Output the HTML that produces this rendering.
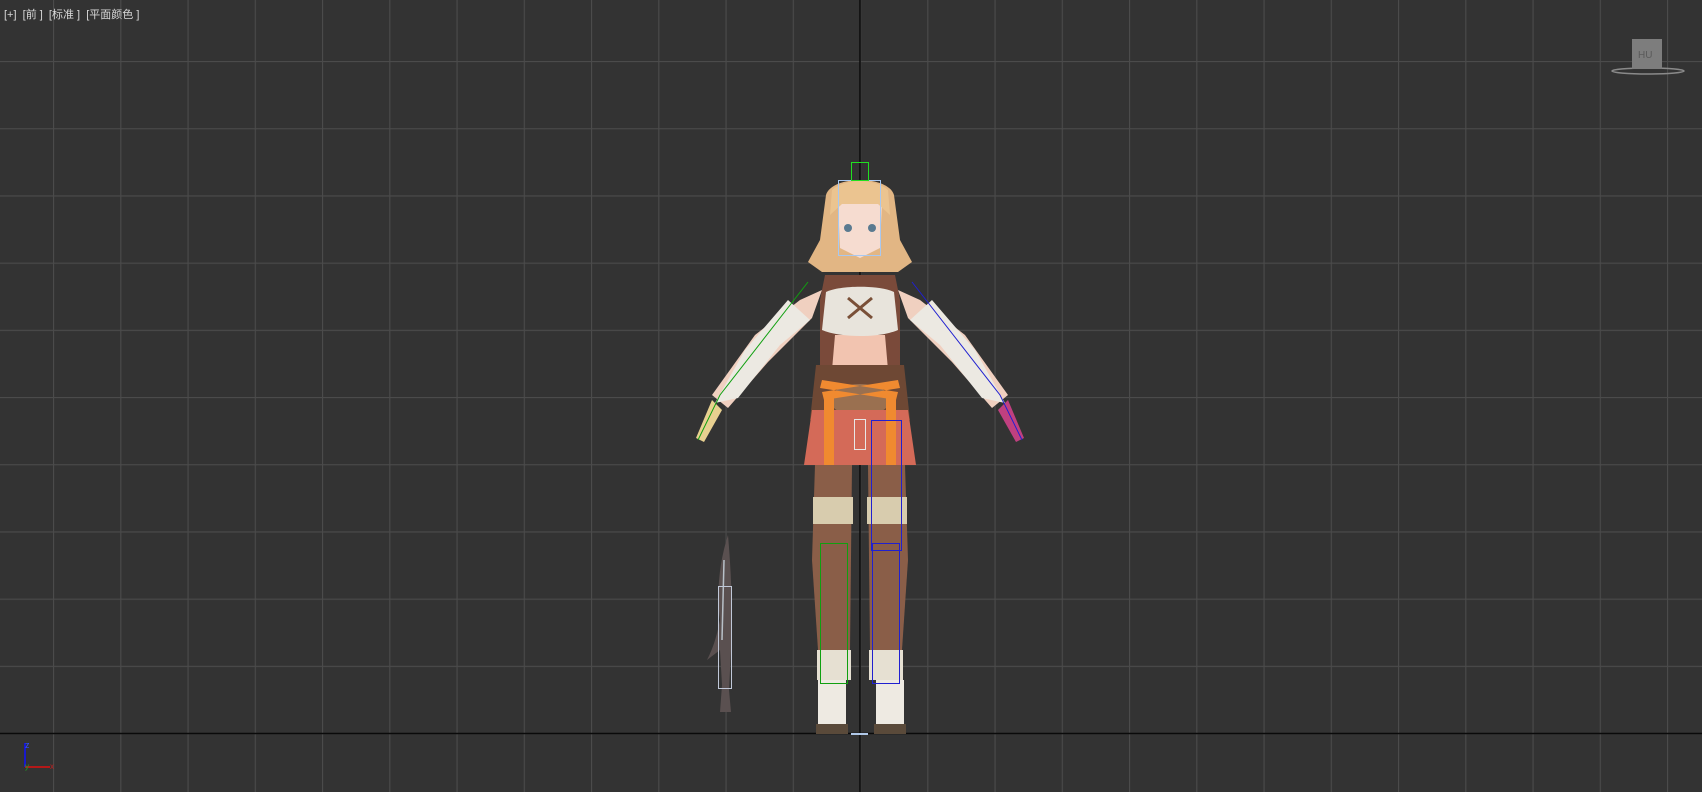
<!DOCTYPE html>
<html><head><meta charset="utf-8"><style>
html,body{margin:0;padding:0;background:#333;overflow:hidden;width:1702px;height:792px}
.lbl{position:absolute;left:4px;top:6px;color:#d8d8d8;font:11px "Liberation Sans","Noto Sans CJK SC",sans-serif;white-space:pre}
svg{position:absolute;left:0;top:0}
</style></head><body>
<svg width="1702" height="792" viewBox="0 0 1702 792">
<defs>
<pattern id="g" x="53" y="61" width="67.25" height="67.2" patternUnits="userSpaceOnUse">
<path d="M0.5 0V67.2M0 0.5H67.25" stroke="#4b4b4b" stroke-width="1.2" fill="none"/>
</pattern>
</defs>
<rect width="1702" height="792" fill="#333"/>
<rect width="1702" height="792" fill="url(#g)"/>
<line x1="860" y1="0" x2="860" y2="792" stroke="#0a0a0a" stroke-width="1.5"/>
<line x1="0" y1="733.5" x2="1702" y2="733.5" stroke="#0a0a0a" stroke-width="1.5"/>
<line x1="25" y1="743" x2="25" y2="767" stroke="#1010ff" stroke-width="1.5"/>
<line x1="25" y1="767" x2="50" y2="767" stroke="#e01010" stroke-width="1.5"/>
<text x="25" y="748" fill="#3050ff" font-size="9" font-family="Liberation Sans">z</text>
<text x="50" y="769" fill="#c02020" font-size="8" font-family="Liberation Sans">x</text>
<text x="25" y="769" fill="#20a020" font-size="8" font-family="Liberation Sans">y</text>
<ellipse cx="1648" cy="71" rx="36" ry="3" fill="none" stroke="#8a8a8a" stroke-width="1.5"/>
<rect x="1632" y="39" width="30" height="30" fill="#7d7d7d"/>
<text x="1638" y="58" fill="#5a5a5a" font-size="10" font-family="Liberation Sans">HU</text>
<path d="M728 535 C720 560 716 590 720 620 C716 640 712 650 707 660 L720 650 L722 685 L720 712 L731 712 L729 690 L731 650 C733 610 731 570 728 535Z" fill="#5a5050"/>
<path d="M724 560 L722 640" stroke="#b8c0c8" stroke-width="1.5"/>
<rect x="718.5" y="586.5" width="13" height="102" fill="none" stroke="#c0c8d8"/>
<path d="M822 290 L800 300 L755 335 L712 395 L728 408 L768 362 L812 318Z" fill="#f0d0c0"/>
<path d="M898 290 L920 300 L965 335 L1008 395 L992 408 L952 362 L908 318Z" fill="#f0d0c0"/>
<path d="M788 300 L810 320 L780 345 L738 398 L715 403 L745 350Z" fill="#ece9e2"/>
<path d="M932 300 L910 320 L940 345 L982 398 L1005 403 L975 350Z" fill="#ece9e2"/>
<path d="M712 400 L696 438 L704 442 L722 410Z" fill="#e8d090"/>
<path d="M1008 400 L1024 438 L1016 442 L998 410Z" fill="#c04080"/>
<path d="M808 282 L720 395 L698 440" stroke="#10a010" fill="none"/>
<path d="M912 282 L1000 395 L1022 440" stroke="#2020d0" fill="none"/>
<path d="M826 195 C832 175 888 175 894 195 L900 240 L912 262 L898 272 L822 272 L808 262 L820 240Z" fill="#e2b684"/>
<path d="M838 202 L882 202 L880 248 L860 258 L840 248Z" fill="#f6dcd0"/>
<circle cx="848" cy="228" r="4" fill="#5a7a90"/><circle cx="872" cy="228" r="4" fill="#5a7a90"/>
<path d="M832 190 C845 178 875 178 888 190 L890 215 L878 204 L842 204 L830 215Z" fill="#ebc490"/>
<rect x="838.5" y="180.5" width="42" height="75" fill="none" stroke="#a8c8f0"/>
<rect x="851.5" y="162.5" width="17" height="18" fill="none" stroke="#20e020"/>
<path d="M825 275 L895 275 L900 300 L900 370 L820 370 L820 300Z" fill="#7a4a3a"/>
<path d="M835 335 L885 335 L888 370 L832 370Z" fill="#f2c4b0"/>
<path d="M826 292 C840 285 880 285 894 292 L898 330 C880 338 840 338 822 330Z" fill="#e8e4dc"/>
<path d="M848 298 L872 318 M872 298 L848 318" stroke="#7a5038" stroke-width="3"/>
<path d="M816 365 L904 365 L910 420 L810 420Z" fill="#6e4834"/>
<ellipse cx="860" cy="400" rx="30" ry="16" fill="#9a7050"/>
<path d="M822 380 L898 392 L896 400 L820 388Z M898 380 L822 392 L824 400 L900 388Z" fill="#f08a30"/>
<path d="M812 410 L908 410 L916 465 L804 465Z" fill="#d46a58"/>
<rect x="824" y="395" width="10" height="100" fill="#f08a30"/>
<rect x="886" y="395" width="10" height="100" fill="#f08a30"/>
<rect x="854.5" y="419.5" width="11" height="30" fill="none" stroke="#e8e8e8"/>
<path d="M815 465 L852 465 L850 650 L818 650 L812 560Z" fill="#8a5e48"/>
<path d="M868 465 L905 465 L908 560 L902 650 L870 650Z" fill="#8a5e48"/>
<rect x="813" y="497" width="40" height="27" fill="#d8ccae"/>
<rect x="867" y="497" width="40" height="27" fill="#d8ccae"/>
<rect x="817" y="650" width="34" height="30" fill="#e6e0d2"/>
<rect x="869" y="650" width="34" height="30" fill="#e6e0d2"/>
<rect x="818" y="680" width="28" height="48" fill="#eeeae2"/>
<rect x="876" y="680" width="28" height="48" fill="#eeeae2"/>
<rect x="816" y="724" width="32" height="10" fill="#5a4a3a"/>
<rect x="874" y="724" width="32" height="10" fill="#5a4a3a"/>
<rect x="820.5" y="543.5" width="27" height="140" fill="none" stroke="#10a010"/>
<rect x="872.5" y="543.5" width="27" height="140" fill="none" stroke="#2020d0"/>
<rect x="871.5" y="420.5" width="30" height="130" fill="none" stroke="#2020d0"/>
<line x1="851" y1="734" x2="868" y2="734" stroke="#b0c8e8" stroke-width="2"/>
</svg>
<div class="lbl">[+]  [前 ]  [标准 ]  [平面颜色 ]</div>
</body></html>
